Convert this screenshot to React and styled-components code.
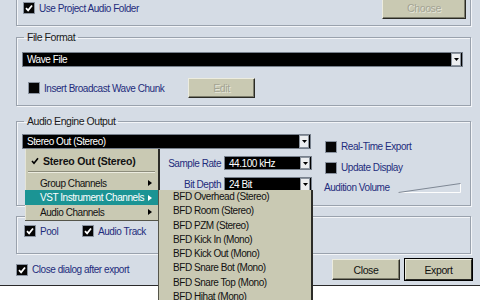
import React from 'react';
import styled, { createGlobalStyle } from 'styled-components';

const GlobalStyle = createGlobalStyle`
  html, body {
    margin: 0;
    padding: 0;
    background: #fff;
    overflow: hidden;
  }
  body {
    width: 480px;
    height: 300px;
    font-family: "Liberation Sans", Arial, sans-serif;
    font-size: 10px;
  }
`;

const Dialog = styled.div`
  position: relative;
  width: 480px;
  height: 286px;
  box-sizing: border-box;
  padding: 0 9px 0 16px;
  background: #d5dce5;
  border-bottom: 1px solid #2a2a2a;
  display: flex;
  flex-direction: column;
  letter-spacing: -0.45px;
`;

const Group = styled.fieldset`
  margin: ${p => p.$mt}px 0 0;
  padding: ${p => p.$pad};
  height: ${p => p.$h}px;
  box-sizing: border-box;
  border: 1px solid #9aa2ad;
  box-shadow: inset 1px 1px 0 #f3f5f8, 1px 1px 0 #f3f5f8;
  min-width: 0;
  flex: none;
`;

const Legend = styled.legend`
  padding: 0 3px;
  margin-left: 2px;
  font-size: 10.5px;
  line-height: 12px;
  color: #1a1a1a;
`;

const Row = styled.div`
  display: flex;
  align-items: center;
  height: ${p => p.$h || 20}px;
  margin-top: ${p => p.$mt || 0}px;
  padding-left: ${p => p.$pl || 0}px;
`;

const CheckItem = styled.label`
  display: flex;
  align-items: center;
  gap: 5px;
  width: ${p => (p.$w ? `${p.$w}px` : 'auto')};
  color: #1e2c7c;
  white-space: nowrap;
  flex: none;
`;

const Box = styled.span`
  width: 10px;
  height: 10px;
  background: #050505;
  box-shadow: 0 0 0 1px #8a93a0;
  display: flex;
  align-items: center;
  justify-content: center;
  flex: none;
`;

const Button = styled.button`
  width: ${p => p.$w}px;
  height: ${p => p.$h || 21}px;
  margin-left: ${p => p.$ml || 0}px;
  padding: 0;
  font-family: inherit;
  font-size: 10.5px;
  letter-spacing: -0.4px;
  color: ${p => (p.disabled ? '#a4a494' : '#111')};
  text-shadow: ${p => (p.disabled ? '1px 1px 0 #e6e6da' : 'none')};
  background: #c9c9b2;
  border: 1px solid;
  border-color: #ececdf #2a2a24 #2a2a24 #ececdf;
  box-shadow: ${p => (p.$default ? '0 0 0 1px #000' : 'inset -1px -1px 0 #7c7c6c')};
  flex: none;
`;

const Select = styled.div`
  position: relative;
  height: ${p => p.$h || 15}px;
  width: ${p => (p.$w ? `${p.$w}px` : 'auto')};
  box-sizing: border-box;
  background: #000;
  color: #fff;
  display: flex;
  align-items: center;
  padding-left: 4px;
  border: 1px solid #77808c;
  white-space: nowrap;
`;

const ArrowBtn = styled.span`
  margin-left: auto;
  margin-right: 1px;
  width: 8px;
  height: ${p => p.$h || 11}px;
  background: #eceef0;
  border: 1px solid #8c949e;
  display: flex;
  align-items: center;
  justify-content: center;
`;

const EngineGrid = styled.div`
  display: grid;
  grid-template-columns: 290px 1fr;
  column-gap: 12px;
`;

const LeftCol = styled.div`
  display: flex;
  flex-direction: column;
  gap: 7px;
`;

const FieldRow = styled.div`
  display: flex;
  align-items: center;
  justify-content: flex-end;
  gap: 3px;
  color: #1e2c7c;
`;

const RightCol = styled.div`
  display: flex;
  flex-direction: column;
  gap: 10px;
  padding-top: 7px;
  padding-left: 2px;
`;

const VolumeRow = styled.div`
  display: flex;
  align-items: center;
  gap: 8px;
  margin-left: -2px;
  margin-top: -1px;
  color: #1e2c7c;
`;

const SelectWrap = styled.div`
  position: relative;
`;

const Menu = styled.div`
  position: absolute;
  top: 15px;
  left: 3px;
  width: 135px;
  box-sizing: border-box;
  padding: 2px 0 1px;
  background: #c9c9b3;
  color: #111;
  border-right: 2px solid #2c2c28;
  border-bottom: 1px solid #55554a;
  box-shadow: inset 1px 0 0 #e4e4d8;
  z-index: 5;
`;

const MenuItem = styled.div`
  position: relative;
  display: flex;
  align-items: center;
  height: ${p => p.$h || 14}px;
  padding-left: ${p => (p.$bold ? 6 : 15)}px;
  padding-right: 6px;
  gap: 4px;
  font-size: ${p => (p.$bold ? 10.5 : 10)}px;
  font-weight: ${p => (p.$bold ? 700 : 400)};
  letter-spacing: ${p => (p.$bold ? -0.2 : -0.45)}px;
  background: ${p => (p.$active ? '#1b9494' : 'transparent')};
  color: ${p => (p.$active ? '#fff' : '#111')};
  white-space: nowrap;
`;

const Sep = styled.div`
  height: 0;
  margin: 1px 3px 3px 3px;
  border-top: 1px solid #8d8d7c;
  border-bottom: 1px solid #ececdf;
`;

const SubArrow = styled.span`
  margin-left: auto;
  width: 0;
  height: 0;
  border-top: 3.5px solid transparent;
  border-bottom: 3.5px solid transparent;
  border-left: 4px solid ${p => (p.$active ? '#fff' : '#000')};
`;

const SubMenu = styled.div`
  position: absolute;
  top: 0;
  left: 133px;
  width: 155px;
  box-sizing: border-box;
  background: #c9c9b3;
  border-right: 2px solid #2c2c28;
  border-left: 1px solid #55554a;
  z-index: 6;
`;

const SubItem = styled.div`
  height: 14.3px;
  line-height: 14.3px;
  padding-left: 14px;
  color: #111;
  font-size: 10px;
  white-space: nowrap;
`;

const Footer = styled.div`
  flex: 1;
  display: flex;
  align-items: center;
  padding-left: 1px;
  margin-right: -1px;
`;

const FooterButtons = styled.div`
  margin-left: auto;
  display: flex;
  align-items: center;
  gap: 5px;
`;

const Check = ({ checked }) => (
  <Box>
    {checked && (
      <svg width="8" height="8" viewBox="0 0 8 8">
        <path d="M1 4.2 L3.1 6.3 L7 1.5" stroke="#fff" strokeWidth="1.8" fill="none" />
      </svg>
    )}
  </Box>
);

const Down = () => (
  <svg width="5" height="3" viewBox="0 0 5 3">
    <path d="M0 0 H5 L2.5 3 Z" fill="#000" />
  </svg>
);

const Tick = () => (
  <svg width="8" height="8" viewBox="0 0 8 8">
    <path d="M1 4 L3 6.3 L7 1.2" stroke="#000" strokeWidth="1.6" fill="none" />
  </svg>
);

const Wedge = () => (
  <svg width="63" height="10" viewBox="0 0 63 10">
    <path d="M0.5 9.5 L62.5 9.5 L62.5 0.5" stroke="#fdfdfd" strokeWidth="1" fill="none" />
    <path d="M0.5 9.5 L62.5 0.5" stroke="#7e8794" strokeWidth="1" fill="none" />
  </svg>
);

const subItems = [
  'BFD Overhead (Stereo)',
  'BFD Room (Stereo)',
  'BFD PZM (Stereo)',
  'BFD Kick In (Mono)',
  'BFD Kick Out (Mono)',
  'BFD Snare Bot (Mono)',
  'BFD Snare Top (Mono)',
  'BFD Hihat (Mono)',
];

export default function App() {
  return (
    <>
      <GlobalStyle />
      <Dialog>
        <Group $mt={-10} $h={36} $pad="0 4px 0 7px">
          <Row $h={34}>
            <CheckItem>
              <Check checked />
              Use Project Audio Folder
            </CheckItem>
            <Button disabled $w={84} $h={22} style={{ marginLeft: 'auto' }}>Choose</Button>
          </Row>
        </Group>

        <Group $mt={5} $h={75} $pad="9px 7px 0 5px">
          <Legend>File Format</Legend>
          <Select>
            Wave File
            <ArrowBtn><Down /></ArrowBtn>
          </Select>
          <Row $mt={11} $pl={7}>
            <CheckItem $w={159}>
              <Check />
              Insert Broadcast Wave Chunk
            </CheckItem>
            <Button disabled $w={67} $h={20}>Edit</Button>
          </Row>
        </Group>

        <Group $mt={9} $h={91} $pad="7px 7px 0 5px">
          <Legend>Audio Engine Output</Legend>
          <EngineGrid>
            <LeftCol>
              <SelectWrap>
                <Select $w={289}>
                  Stereo Out (Stereo)
                  <ArrowBtn><Down /></ArrowBtn>
                </Select>
                <Menu>
                  <MenuItem $bold $h={19}>
                    <Tick />
                    Stereo Out (Stereo)
                  </MenuItem>
                  <Sep />
                  <MenuItem>
                    Group Channels
                    <SubArrow />
                  </MenuItem>
                  <MenuItem $active $h={15}>
                    VST Instrument Channels
                    <SubArrow $active />
                    <SubMenu>
                      {subItems.map(s => (
                        <SubItem key={s}>{s}</SubItem>
                      ))}
                    </SubMenu>
                  </MenuItem>
                  <MenuItem>
                    Audio Channels
                    <SubArrow />
                  </MenuItem>
                </Menu>
              </SelectWrap>
              <FieldRow>
                Sample Rate
                <Select $w={88} $h={14}>
                  44.100 kHz
                  <ArrowBtn $h={10}><Down /></ArrowBtn>
                </Select>
              </FieldRow>
              <FieldRow>
                Bit Depth
                <Select $w={88}>
                  24 Bit
                  <ArrowBtn><Down /></ArrowBtn>
                </Select>
              </FieldRow>
            </LeftCol>
            <RightCol>
              <CheckItem>
                <Check />
                Real-Time Export
              </CheckItem>
              <CheckItem>
                <Check />
                Update Display
              </CheckItem>
              <VolumeRow>
                Audition Volume
                <Wedge />
              </VolumeRow>
            </RightCol>
          </EngineGrid>
        </Group>

        <Group $mt={10} $h={38} $pad="8px 0 0 8px">
          <Row $h={12}>
            <CheckItem $w={58}>
              <Check checked />
              Pool
            </CheckItem>
            <CheckItem>
              <Check checked />
              Audio Track
            </CheckItem>
          </Row>
        </Group>

        <Footer>
          <CheckItem>
            <Check checked />
            Close dialog after export
          </CheckItem>
          <FooterButtons>
            <Button $w={68}>Close</Button>
            <Button $w={67} $h={21} $default>Export</Button>
          </FooterButtons>
        </Footer>
      </Dialog>
    </>
  );
}
